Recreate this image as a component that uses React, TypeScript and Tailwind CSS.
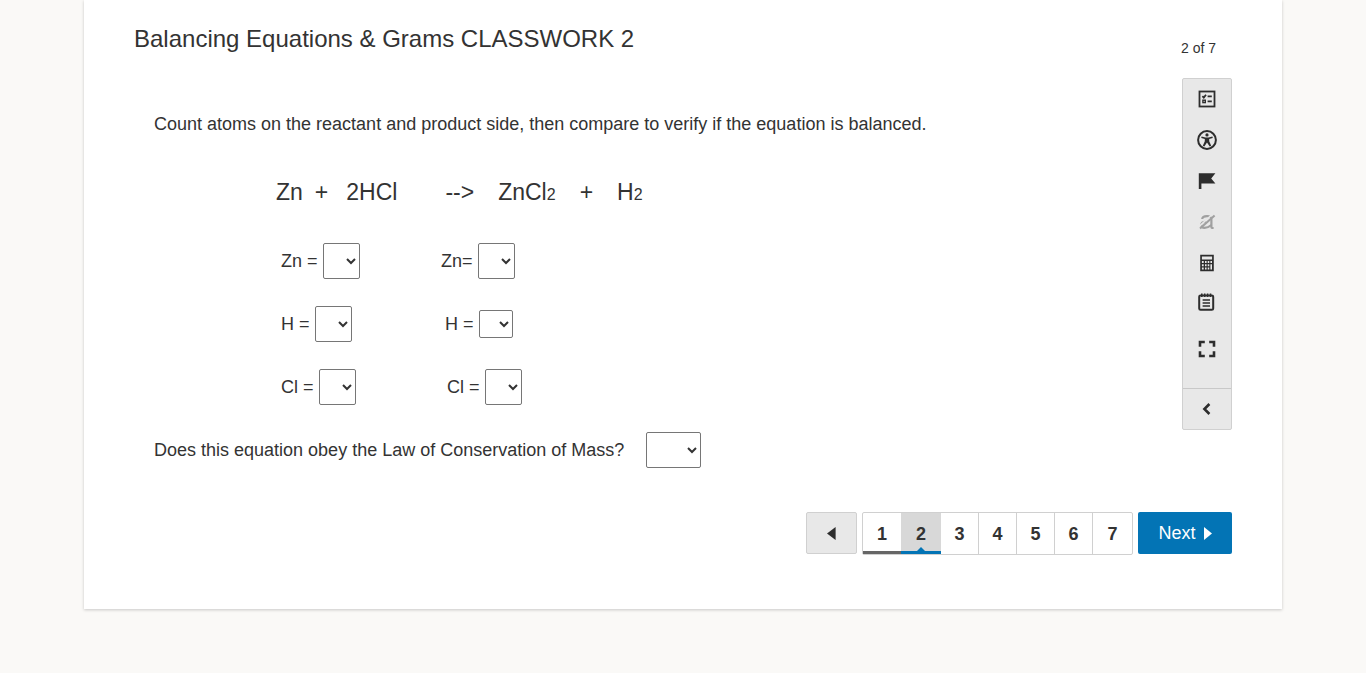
import { useState, type ReactNode } from "react";
import { clsx } from "clsx";

const COUNTS = ["1", "2", "3", "4"];
const QUESTIONS = [1, 2, 3, 4, 5, 6, 7];

interface BlankProps {
  label: string;
  options: string[];
  className?: string;
}

// Inline drop-down that the student fills in.
function Blank({ label, options, className = "h-9 w-[37px]" }: BlankProps) {
  return (
    <select
      aria-label={label}
      defaultValue=""
      className={clsx("shrink-0 rounded-xs border border-[#767676] bg-white text-base", className)}
    >
      <option value=""></option>
      {options.map((o) => (
        <option key={o} value={o}>
          {o}
        </option>
      ))}
    </select>
  );
}

interface AtomRowProps {
  left: string;
  right: string;
  rightClass?: string;
  selectClass?: string;
}

function AtomRow({ left, right, rightClass, selectClass }: AtomRowProps) {
  return (
    <div className="flex h-[63px] items-center pl-[127px]">
      <div className="flex w-40 items-center gap-[5px]">
        <span>{left}</span>
        <Blank label={`Reactant atoms, ${left}`} options={COUNTS} />
      </div>
      <div className={clsx("flex items-center gap-[5px]", rightClass)}>
        <span>{right}</span>
        <Blank label={`Product atoms, ${right}`} options={COUNTS} className={selectClass} />
      </div>
    </div>
  );
}

function Sub({ children }: { children: ReactNode }) {
  return <span className="text-base">{children}</span>;
}

interface ToolProps {
  label: string;
  disabled?: boolean;
  className?: string;
  children: ReactNode;
}

function Tool({ label, disabled, className = "h-[41px]", children }: ToolProps) {
  return (
    <button
      type="button"
      aria-label={label}
      disabled={disabled}
      className={clsx(
        "flex w-full items-center justify-center",
        disabled ? "text-[#a0a0a0]" : "text-[#2d2d2d]",
        className,
      )}
    >
      <svg width="20" height="20" viewBox="0 0 20 20" fill="none" stroke="currentColor">
        {children}
      </svg>
    </button>
  );
}

function Toolbar() {
  return (
    <div className="w-[50px] rounded-xs border border-[#d0d0d0] bg-[#e8e8e8]">
      <Tool label="Question list" className="h-10">
        <rect x="2.5" y="2.5" width="15" height="15" strokeWidth="1.8" />
        <path d="M10.6 7.4h4.2M10.6 12.4h4.2" strokeWidth="1.8" />
        <path d="M5.4 7.2l1.4 1.4L9 5.8" strokeWidth="1.8" />
        <rect x="5.9" y="11.2" width="2.4" height="2.4" strokeWidth="1.4" />
      </Tool>
      <Tool label="Accessibility">
        <circle cx="10" cy="10" r="8.9" strokeWidth="2" />
        <circle cx="10" cy="4.9" r="1.6" fill="currentColor" stroke="none" />
        <path
          d="M4.6 6.4l3.9 1h3l3.9-1 .4 1.5-3.6 1.1v2.3l2 4.5-1.5.7L10 12.5l-2.7 4-1.5-.7 2-4.5V9L4.2 7.9z"
          fill="currentColor"
          stroke="none"
        />
      </Tool>
      <Tool label="Flag question">
        <path d="M1.8 2.3h16.6l-4.2 5.2 4.2 5H4.4V18H1.8z" fill="currentColor" stroke="none" />
      </Tool>
      <Tool label="Answer eliminator" disabled>
        <path d="M5.2 7C5.4 4.6 7 4.2 10 4.2c3.4 0 4.4 1 4.4 3.6v7.4c0 .6.6.8 2.2.8" strokeWidth="2.2" />
        <path d="M9 9.6c-3.4.2-4.8 1.2-4.8 3.4 0 1.8 1.2 2.9 3.4 2.9 2.6 0 4.4-.9 6.8-2.9" strokeWidth="2.2" />
        <path d="M2 14.6L15.6 2" stroke="#e8e8e8" strokeWidth="1.6" />
        <path d="M3 16.6L17.6 3.4" strokeWidth="2" />
      </Tool>
      <Tool label="Calculator" className="h-[42px]">
        <path
          d="M3.2 1.8h13.6v16.4H3.2zM4.9 3.5v3h10.2v-3zM4.9 8.1v2h1.8v-2zM8 8.1v2h1.6v-2zM10.7 8.1v2h1.6v-2zM13.4 8.1v2H15v-2zM4.9 11.3v2h1.8v-2zM8 11.3v2h1.6v-2zM10.7 11.3v2h1.6v-2zM4.9 14.5v2h1.8v-2zM8 14.5v2h1.6v-2zM10.7 14.5v2h1.6v-2zM13.4 11.3v5.2H15v-5.2z"
          fill="currentColor"
          fillRule="evenodd"
          stroke="none"
        />
      </Tool>
      <Tool label="Notepad" className="h-9">
        <rect x="2.2" y="3.4" width="14" height="14.4" rx="1.4" strokeWidth="2" />
        <path d="M4.8 1.6v3.4M7.7 1.6v3.4M10.6 1.6v3.4M13.5 1.6v3.4" strokeWidth="1.6" />
        <path d="M5.6 8h7.4M5.6 11h7.4M5.6 14h7.4" strokeWidth="1.7" />
      </Tool>
      <Tool label="Full screen" className="h-[58px]">
        <path
          d="M3 7.8V3h4.8M12.2 3H17v4.8M17 12.2V17h-4.8M7.8 17H3v-4.8"
          strokeWidth="2.6"
        />
      </Tool>
      <div className="mt-2.5 border-t border-[#c8c8c8]">
        <Tool label="Collapse toolbar" className="h-10">
          <path d="M12.4 5L7.4 10l5 5" strokeWidth="2.6" />
        </Tool>
      </div>
    </div>
  );
}

function Pager() {
  const [current, setCurrent] = useState(2);

  return (
    <nav aria-label="Questions" className="flex items-start justify-end gap-[5px]">
      <button
        type="button"
        aria-label="Previous"
        onClick={() => setCurrent((n) => Math.max(1, n - 1))}
        className="flex h-[42px] w-[51px] items-center justify-center rounded-xs border border-[#d0d0d0] bg-[#e8e8e8]"
      >
        <svg width="10" height="13" viewBox="0 0 10 13" fill="#2d2d2d">
          <path d="M8.6 0v13L0 6.5z" />
        </svg>
      </button>
      <div className="flex h-[43px] rounded-xs border border-[#d0d0d0]">
        {QUESTIONS.map((n) => (
          <button
            key={n}
            type="button"
            aria-current={n === current ? "step" : undefined}
            onClick={() => setCurrent(n)}
            className={clsx(
              "relative flex items-center justify-center text-lg font-bold",
              n === current && "w-10 bg-[#d8d8d8]",
              n !== current && (n === 7 ? "w-[39px]" : "w-[38px]"),
              n > current && n < 7 && "border-r border-[#d0d0d0]",
            )}
          >
            {n}
            {n <= current && (
              <span
                className={clsx(
                  "absolute inset-x-0 bottom-0 h-[3px]",
                  n === current ? "bg-[#0374b5]" : "bg-[#666]",
                )}
              />
            )}
            {n === current && (
              <svg className="absolute bottom-[3px]" width="8" height="4" viewBox="0 0 8 4" fill="#0374b5">
                <path d="M4 0l4 4H0z" />
              </svg>
            )}
          </button>
        ))}
      </div>
      <button
        type="button"
        onClick={() => setCurrent((n) => Math.min(7, n + 1))}
        className="flex h-[42px] w-[94px] items-center justify-center gap-2 rounded-xs bg-[#0374b5] text-lg text-white"
      >
        Next
        <svg width="8" height="13" viewBox="0 0 8 13" fill="currentColor">
          <path d="M0 0v13l8-6.5z" />
        </svg>
      </button>
    </nav>
  );
}

export default function App() {
  return (
    <div className="min-h-screen bg-[#faf9f7] px-[84px] pb-16 font-['Liberation_Sans',Arial,sans-serif] text-[#333]">
      <main className="bg-white px-[50px] pb-[54px] shadow-[0_1px_3px_rgba(0,0,0,0.2)]">
        <div className="flex justify-between">
          <div className="min-w-0 flex-1 pt-[23px]">
            <h1 className="text-2xl">Balancing Equations &amp; Grams CLASSWORK 2</h1>

            <div className="pl-5 pt-[57px] text-lg">
              <p className="leading-6">
                Count atoms on the reactant and product side, then compare to verify if the equation is balanced.
              </p>

              <div className="flex items-baseline pb-[21px] pl-[122px] pt-10 text-[23px] leading-8">
                <span>Zn</span>
                <span className="pl-3">+</span>
                <span className="pl-[18px]">2HCl</span>
                <span className="pl-12">--&gt;</span>
                <span className="pl-6">
                  ZnCl<Sub>2</Sub>
                </span>
                <span className="pl-6">+</span>
                <span className="pl-6">
                  H<Sub>2</Sub>
                </span>
              </div>

              <AtomRow left="Zn =" right="Zn=" />
              <AtomRow left="H =" right="H =" rightClass="pl-1" selectClass="h-7 w-[34px]" />
              <AtomRow left="Cl =" right="Cl =" rightClass="pl-1.5" />

              <div className="flex h-[63px] items-center gap-[22px]">
                <span>Does this equation obey the Law of Conservation of Mass?</span>
                <Blank label="Obeys conservation of mass" options={["Yes", "No"]} className="h-9 w-[55px]" />
              </div>
            </div>
          </div>

          <aside className="flex flex-col items-end pt-[38px]">
            <p className="mb-5 pr-4 text-sm">2 of 7</p>
            <Toolbar />
          </aside>
        </div>

        <div className="pt-[31px]">
          <Pager />
        </div>
      </main>
    </div>
  );
}
